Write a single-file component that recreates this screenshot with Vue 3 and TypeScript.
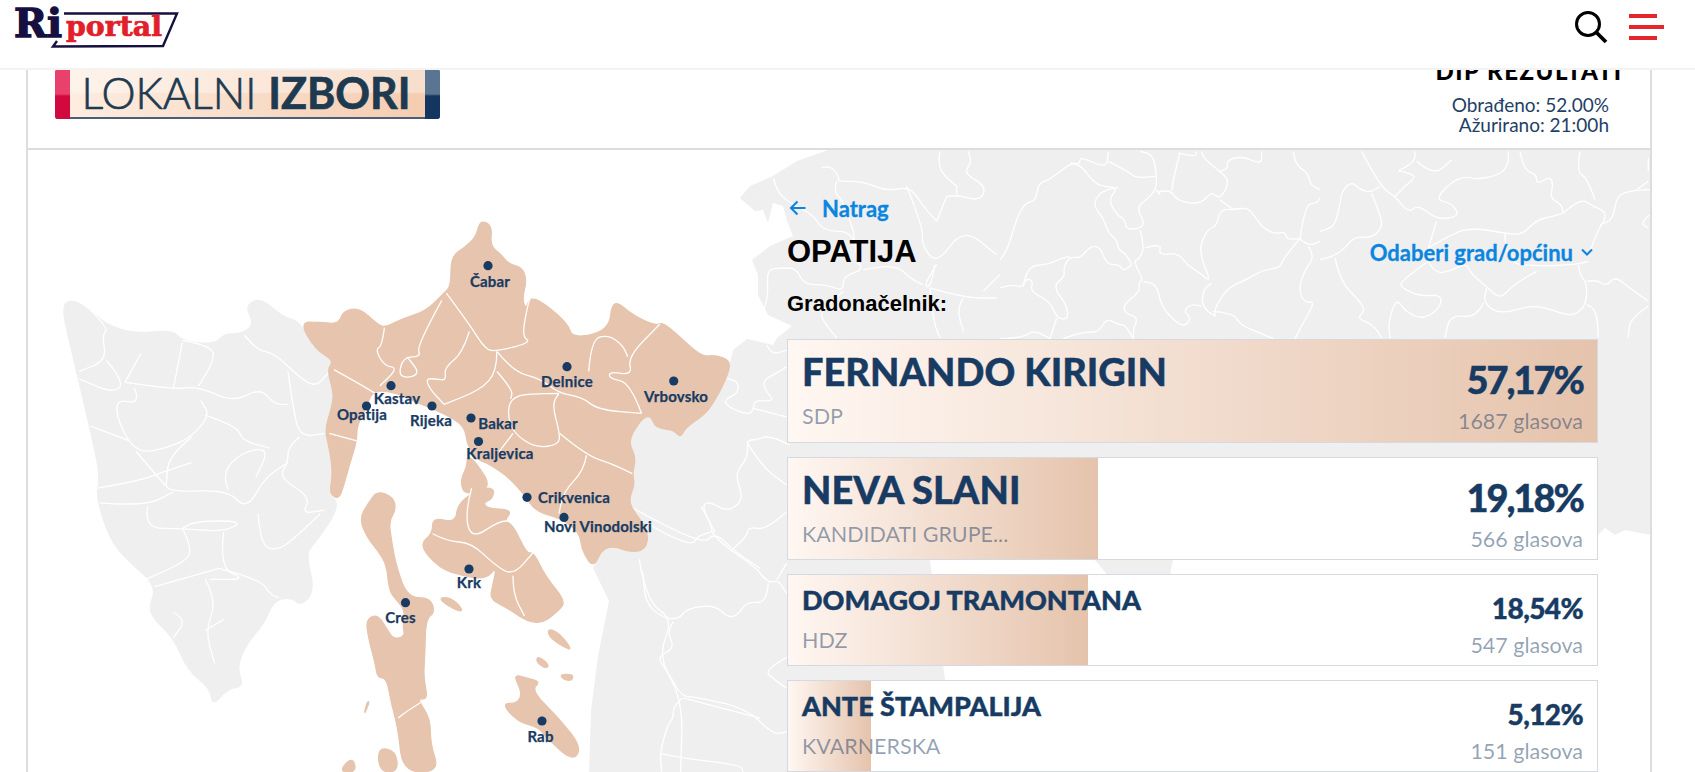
<script setup lang="ts">
interface Candidate {
  name: string
  party: string
  pct: number
  votes: number
  big?: boolean
}
const candidates: Candidate[] = [
  { name: "FERNANDO KIRIGIN", party: "SDP", pct: 57.17, votes: 1687, big: true },
  { name: "NEVA SLANI", party: "KANDIDATI GRUPE...", pct: 19.18, votes: 566, big: true },
  { name: "DOMAGOJ TRAMONTANA", party: "HDZ", pct: 18.54, votes: 547 },
  { name: "ANTE ŠTAMPALIJA", party: "KVARNERSKA", pct: 5.12, votes: 151 }
]
const barWidth = (pct: number) => Math.min(pct * 2, 100) + "%"
const pctLabel = (pct: number) => pct.toFixed(2).replace(".", ",") + "%"

const pins = [
  { name: "Čabar", x: 488, y: 265.7, lx: 490, ly: 282.4 },
  { name: "Kastav", x: 391, y: 385.7, lx: 397, ly: 399 },
  { name: "Opatija", x: 366.5, y: 406, lx: 362, ly: 415 },
  { name: "Rijeka", x: 432, y: 406, lx: 431, ly: 421 },
  { name: "Bakar", x: 471, y: 418, lx: 498, ly: 423.6 },
  { name: "Kraljevica", x: 478.5, y: 441.5, lx: 500, ly: 453.5 },
  { name: "Delnice", x: 567, y: 366.7, lx: 567, ly: 382.4 },
  { name: "Vrbovsko", x: 673.7, y: 381, lx: 676, ly: 397 },
  { name: "Crikvenica", x: 527, y: 497.3, lx: 574, ly: 497.7 },
  { name: "Novi Vinodolski", x: 564, y: 517.4, lx: 598, ly: 527 },
  { name: "Krk", x: 469, y: 569, lx: 469, ly: 583 },
  { name: "Cres", x: 405.5, y: 602.7, lx: 400.5, ly: 618 },
  { name: "Rab", x: 542, y: 721, lx: 540.5, ly: 737 }
]

// rounds the traced points, quadratic curves through the midpoints
const smooth = (raw: string, closed = false) => {
  const p = raw.split(" ").map(s => s.split(",").map(Number))
  const mid = (a: number[], b: number[]) => `${(a[0] + b[0]) / 2} ${(a[1] + b[1]) / 2}`
  if (closed) {
    let d = `M${mid(p[p.length - 1], p[0])}`
    p.forEach((pt, i) => {
      d += ` Q${pt[0]} ${pt[1]} ${mid(pt, p[(i + 1) % p.length])}`
    })
    return d + "Z"
  }
  let d = `M${p[0][0]} ${p[0][1]}`
  for (let i = 1; i < p.length - 1; i++) {
    d += ` Q${p[i][0]} ${p[i][1]} ${mid(p[i], p[i + 1])}`
  }
  const last = p[p.length - 1]
  return d + ` L${last[0]} ${last[1]}`
}

// traced shapes, each group keeps the scale it was traced at
const left = "translate(40 200) scale(.4592 .3648)"
const landLeft = "45,290 70,270 110,300 145,340 205,365 290,355 310,385 380,395 400,365 440,365 465,340 445,290 480,265 530,320 565,330 600,410 640,440 625,465 640,530 635,570 620,630 630,680 638,750 630,810 650,825 640,870 600,940 580,970 600,1070 570,1115 545,1090 510,1100 490,1160 450,1220 430,1280 445,1335 410,1340 375,1390 370,1340 320,1290 290,1200 230,1130 255,1060 190,990 150,930 120,810 130,760 110,640 80,480 65,400"
const landRight = "828,150 1652,150 1652,535 1640,533 1625,530 1615,535 1605,528 1598,535 1176,545 1170,575 1110,578 1095,560 1050,545 930,560 935,600 945,680 935,775 589,775 591,711 598,656 609,601 593,568 610,540 600,470 620,400 700,370 730,362 732,355 733,350 747,339 773,345 777,338 792,326 768,315 758,295 758,275 752,260 770,246 793,236 787,221 783,206 773,203 768,223 763,210 755,211 740,198 750,186 773,176 797,161"
const peach = [
  "958,55 985,70 980,125 1005,150 1020,175 1050,185 1060,220 1050,270 1058,300 1068,265 1100,285 1150,340 1158,375 1205,370 1240,345 1245,290 1258,280 1290,315 1340,345 1355,335 1385,365 1440,430 1470,425 1505,440 1495,490 1465,560 1445,590 1405,625 1395,652 1380,630 1340,625 1330,590 1310,600 1280,660 1298,705 1290,750 1295,780 1285,810 1285,840 1325,905 1320,960 1280,965 1255,950 1225,955 1205,1010 1180,960 1175,910 1130,870 1080,855 1050,800 1020,760 980,725 950,710 930,670 925,620 880,585 820,555 780,530 725,520 710,570 690,620 690,660 675,720 660,790 650,820 630,805 638,750 630,680 620,630 635,570 640,530 625,465 640,440 600,410 565,335 610,335 650,340 660,305 695,295 735,340 750,350 790,325 840,305 880,255 895,235 895,155 925,130 950,100",
  "930,700 950,720 985,790 925,810 915,770 930,730",
  "960,790 990,790 985,820 965,830 975,845 1030,850 1010,880 1030,890 1060,970 1075,965 1100,1030 1145,1100 1130,1125 1095,1160 1060,1155 1020,1120 980,1095 985,1060 995,1005 970,1040 920,1030 870,1010 825,945 855,915 855,870 905,885 910,830",
  "735,797 770,815 775,850 760,880 765,930 775,1000 800,1090 850,1090 860,1130 840,1150 838,1250 835,1310 845,1370 820,1365 850,1420 850,1490 870,1568 790,1568 780,1450 765,1380 755,1310 735,1310 730,1270 715,1200 710,1150 735,1135 755,1175 770,1205 795,1195 790,1170 795,1125 775,1095 760,1070 755,1000 735,960 715,930 695,875 715,830",
  "868,1090 895,1090 920,1120 915,1130 885,1110",
  "1105,1175 1130,1185 1160,1235 1140,1225 1110,1200",
  "1085,1250 1110,1275 1100,1285 1080,1265",
  "1132,1300 1162,1300 1158,1318 1140,1315",
  "1030,1300 1060,1310 1090,1320 1070,1345 1130,1420 1180,1500 1160,1540 1100,1470 1085,1445 1040,1430 1005,1380 1040,1380 1050,1350",
  "735,1500 775,1510 780,1568 740,1568",
  "650,1568 680,1525 690,1568",
  "712,1375 718,1375 705,1415"
]
const peachLines = [
  "885,255 935,340 970,410 995,415 1070,390 1050,375 1060,300 1068,265",
  "995,415 995,470 960,520 880,560",
  "995,415 1030,470 1090,490 1130,530 1180,540 1215,575 1310,585",
  "1130,530 1060,530 1025,545 1018,590 1032,640 1080,680 1130,670 1132,640 1115,560 1130,530",
  "995,470 1030,520 1025,545",
  "1132,640 1190,700 1240,720 1290,750",
  "1190,700 1185,740 1140,800 1130,860",
  "875,275 820,400 830,430 790,430 780,490 830,480 800,430",
  "935,360 920,420 880,460 885,495 860,490 840,490 850,520 880,560",
  "750,350 745,400 730,410 750,455 780,460 740,510",
  "640,465 690,500 730,530",
  "630,640 690,660",
  "1310,585 1285,500 1240,490 1240,470 1290,480 1280,430 1350,340",
  "1195,470 1200,380 1240,370 1270,400 1280,430",
  "1030,640 1000,690",
  "940,790 925,860 940,930 1000,880 1030,880",
  "855,915 885,935 940,940 990,1000 1030,1030 1075,965",
  "1030,1030 1030,1080 1055,1140",
  "845,1365 800,1400 780,1420"
]
const borders = [
  {
    t: left,
    lines: [
      "100,290 150,350 135,370 145,440 85,470",
      "145,440 185,500 160,530 85,490",
      "185,500 290,520 345,510 420,555 480,515 510,560 540,560",
      "290,520 310,390",
      "220,420 185,500",
      "310,385 380,400 375,450 345,510",
      "205,515 220,560 165,545 170,610 210,695 275,680 330,650 370,590 350,550",
      "110,620 195,660",
      "445,370 470,410 510,420 560,480 600,515 630,470",
      "540,470 550,560 565,650 620,640",
      "565,650 540,675 540,720 520,760 590,815 570,860 620,850",
      "210,690 270,780 290,800 410,795 450,850 490,760 540,720",
      "130,830 230,840 290,800",
      "235,840 225,900 310,900 400,910 445,880 340,880 310,900",
      "400,910 390,1010 450,1040 370,1040",
      "310,900 330,950 320,990 230,1040",
      "125,790 215,770 270,745 330,720",
      "410,795 395,750 440,690 500,680 470,760",
      "330,650 280,700 275,780",
      "360,590 430,620 440,660 500,680",
      "475,860 480,950 520,960 560,920 610,860",
      "390,1010 250,1060",
      "390,1010 480,1040 500,1080 520,1090",
      "360,1040 385,1100 360,1180 380,1270",
      "290,1130 320,1150 290,1200",
      "400,1150 360,1180",
      "1305,985 1320,1100 1380,1150 1345,1250 1400,1370 1395,1568",
      "1400,1365 1568,1420",
      "1285,840 1440,950 1470,910 1510,960 1568,1010",
      "1440,840 1470,910"
    ]
  },
  {
    t: "translate(680 148) scale(.3333)",
    lines: [
      "425,60 450,50 480,90 470,100 550,100 620,130 690,115 730,175 770,220",
      "470,100 460,130 490,160 520,250",
      "280,90 290,130 330,165 400,200 430,250 520,250 535,350",
      "520,250 530,340 550,365 490,385 490,430 440,410 370,410 350,360 300,360 260,365 265,440 250,490",
      "680,115 730,240 725,290 770,350 850,240 950,320",
      "800,145 770,220",
      "800,145 830,140 900,160 920,115 850,75 875,45 865,10",
      "830,115 830,140",
      "780,10 770,60 830,115",
      "770,350 730,410 750,420 765,350",
      "730,410 700,400 650,350 550,365",
      "750,420 850,450 950,450",
      "750,420 760,520 780,570",
      "850,450 830,480 850,550",
      "490,430 420,490 430,520 470,570",
      "960,380 910,430"
    ]
  },
  {
    t: "translate(1000 148) scale(.3333)",
    lines: [
      "0,335 20,315 50,210 75,165 108,158 115,105 150,95 212,45 240,48 240,25 320,62 325,10",
      "212,45 240,48 270,90 300,115 355,118 325,155 350,200 375,215 380,248 440,235 408,180 440,155 468,125 470,85 460,20 420,10",
      "325,40 385,70 405,90 470,85",
      "355,118 310,125 285,155 285,180 310,210 325,255 350,275 355,305 380,320 395,350",
      "420,245 435,300 415,335 400,340 430,395 415,405 420,430 370,470 375,495 415,510 400,540 400,572",
      "435,300 485,285 475,322 535,315 560,350 600,375 635,405 595,310 620,245 650,235 660,185 700,185 745,178 770,215 795,245 830,258 855,250 860,275 900,272",
      "468,125 485,145 470,130 515,128 530,158 600,170 635,130 660,155 690,100 660,70 610,30 605,10",
      "535,15 585,28 590,10",
      "540,15 525,70 515,128",
      "660,70 685,65 680,35 730,25 785,50 785,10",
      "660,155 700,185",
      "900,272 915,170 950,165 960,150",
      "880,10 885,50 925,75 930,110 960,125",
      "900,272 925,295 960,280",
      "900,272 850,330 840,360 790,365 740,395 680,420 640,490 650,510 605,475 610,425 635,405",
      "925,295 945,325 915,365 895,425 915,465 945,460 915,515 885,572",
      "0,420 35,408 65,420 80,390 100,400 90,430 150,460 170,510 205,515 200,470 158,415 195,385 190,360 210,325 240,332 270,295 300,295 320,350 360,350 370,370 395,350",
      "70,415 80,355 140,350 175,335 210,325",
      "150,572 170,510",
      "0,572 70,570 100,545 150,572",
      "190,572 245,550 295,555 320,510 355,530 375,530 400,572",
      "605,475 575,465 550,490 575,510 550,540 500,495 480,460 470,410 430,400",
      "640,490 700,495 720,530 780,555 820,572"
    ]
  },
  {
    t: "translate(1320 148) scale(.3333)",
    lines: [
      "125,10 180,115 225,145 265,195 295,170 350,215 420,205 395,165 345,155 395,100 440,85 470,95 540,80 565,50 565,10",
      "180,115 155,135 120,125 95,100 65,130 60,170 45,230 20,245 0,250",
      "155,135 185,210 185,240 155,270 105,265 75,300 40,325 0,335",
      "285,10 290,40 230,70 250,70 290,85 260,110 225,145",
      "290,40 340,85 395,35",
      "600,10 610,65 650,80 650,110 690,85 700,110 690,150 725,170 730,195",
      "730,195 780,150 820,175 855,190 855,215 835,245 810,310",
      "325,300 350,220",
      "325,300 400,255 460,240 555,255 605,262 650,215 700,205 730,195",
      "555,255 555,345 650,355 770,350 805,340",
      "325,340 345,380 400,365 440,345 455,380 500,415 540,455 580,410 650,370",
      "325,340 240,400 245,420 300,445 365,440 360,480 310,515 255,490 230,450 205,520 210,570",
      "45,330 60,400 120,460 135,490 110,510 160,530 185,570",
      "775,350 780,385 800,400 800,470 760,505 705,490 640,470 540,500 490,465 500,420",
      "490,465 470,510 390,500 375,570",
      "800,400 830,395 860,415 885,385 930,420 985,460",
      "985,475 930,510 925,570",
      "800,470 830,480 835,570",
      "990,125 950,125 890,140 880,215 840,230",
      "990,200 960,225 985,240",
      "780,10 770,70 800,90 825,155",
      "950,125 985,100",
      "985,30 985,70"
    ]
  },
  {
    t: "translate(640 330) scale(.3333)",
    lines: [
      "380,45 395,75 440,60",
      "440,110 410,130 370,150 375,180 405,215 345,210 340,235 330,255 270,235 250,210 295,190 295,155 260,145",
      "340,235 415,255 440,260",
      "450,345 390,315 350,330 320,330 325,380 285,430 305,490 300,520 260,545 210,515 185,525 215,590 215,610 270,660 345,710 385,760 415,750 440,790",
      "320,335 365,410 440,465",
      "440,545 380,600 325,590 320,620 275,660",
      "385,760 380,820 320,815 290,860 260,860 225,825 140,835 115,870 60,860 15,815 10,725 0,720",
      "30,585 90,620 160,645 170,620 215,605",
      "100,875 80,905 105,955 50,980 80,1020 125,1100 160,1100 320,1135 400,1215 440,1205",
      "125,1105 100,1130 100,1165 85,1180 60,1265 65,1325",
      "60,1270 130,1285 300,1305 310,1325",
      "410,750 440,700",
      "445,980 370,1020 405,1050 440,1075"
    ]
  }
]
</script>

<template>
  <div class="page">
    <header class="topbar">
      <svg class="logo" width="185" height="50" viewBox="0 0 185 50">
        <polyline points="64,13.5 177,13.5 163,46 53,46.5 57,41" fill="none" stroke="#15103f" stroke-width="2.4" />
        <text class="logo-ri" x="14" y="37" textLength="48" lengthAdjust="spacingAndGlyphs">Ri</text>
        <text class="logo-portal" x="66" y="36" textLength="96" lengthAdjust="spacingAndGlyphs">portal</text>
      </svg>
      <div class="top-icons">
        <svg width="36" height="36" viewBox="0 0 36 36">
          <circle cx="14" cy="14" r="11.5" fill="none" stroke="#000" stroke-width="3" />
          <line x1="22.5" y1="22.5" x2="32" y2="32" stroke="#000" stroke-width="3.8" />
        </svg>
        <div class="burger"><span></span><span></span><span></span></div>
      </div>
    </header>

    <main class="card">
      <div class="card-top">
        <div class="banner">
          <i class="cap cap-red"></i>
          <span class="banner-text">LOKALNI <b>IZBORI</b></span>
          <i class="cap cap-blue"></i>
        </div>
        <div class="status">
          <h3>DIP REZULTATI</h3>
          <p>Obrađeno: 52.00%</p>
          <p>Ažurirano: 21:00h</p>
        </div>
      </div>

      <section class="map-area">
        <svg class="map" width="1622" height="622" viewBox="28 150 1622 622">
          <polygon :points="landRight" fill="#efefef" />
          <path :d="smooth(landLeft, true)" :transform="left" fill="#efefef" />
          <g v-for="b in borders" :key="b.t" :transform="b.t">
            <path v-for="l in b.lines" :key="l" :d="smooth(l)" class="border" />
          </g>
          <g :transform="left">
            <path v-for="p in peach" :key="p" :d="smooth(p, true)" class="county" />
            <path v-for="l in peachLines" :key="l" :d="smooth(l)" class="border" />
          </g>
          <g v-for="pin in pins" :key="pin.name">
            <circle :cx="pin.x" :cy="pin.y" r="4.6" fill="#183b63" />
            <text class="pin-label" :x="pin.lx" :y="pin.ly + 5">{{ pin.name }}</text>
          </g>
        </svg>

        <div class="panel">
          <a class="back">
            <svg width="18" height="16" viewBox="0 0 18 16">
              <path d="M16.5 8H2M8.5 1.5L2 8l6.5 6.5" fill="none" stroke="#0a85e0" stroke-width="2.1" />
            </svg>
            Natrag
          </a>
          <div class="title-row">
            <h1>OPATIJA</h1>
            <a class="picker">
              Odaberi grad/općinu
              <svg width="12" height="8" viewBox="0 0 12 8">
                <path d="M1 1.5l5 5 5-5" fill="none" stroke="#0a85e0" stroke-width="2" />
              </svg>
            </a>
          </div>
          <h2>Gradonačelnik:</h2>
          <div class="results">
            <div v-for="c in candidates" :key="c.name" class="row" :class="{ big: c.big }">
              <div class="bar" :style="{ width: barWidth(c.pct) }"></div>
              <div class="who">
                <div class="name">{{ c.name }}</div>
                <div class="party">{{ c.party }}</div>
              </div>
              <div class="score">
                <div class="pct">{{ pctLabel(c.pct) }}</div>
                <div class="votes">{{ c.votes }} glasova</div>
              </div>
            </div>
          </div>
        </div>
      </section>
    </main>
  </div>
</template>

<style>
html,
body {
  margin: 0;
  background: #fff;
  overflow: hidden;
}
</style>

<style scoped>
.page {
  height: 772px;
  overflow: hidden;
  font-family: Lato, "Liberation Sans", sans-serif;
}
.topbar {
  position: relative;
  z-index: 5;
  height: 68px;
  background: #fff;
  border-bottom: 2px solid #f3f3f3;
  display: flex;
  justify-content: space-between;
  align-items: flex-start;
}
.top-icons {
  display: flex;
  gap: 19px;
  padding: 10px 30px 0 0;
}
.burger {
  width: 36px;
  padding-top: 4px;
  display: flex;
  flex-direction: column;
  gap: 7px;
}
.burger span {
  display: block;
  width: 28px;
  height: 4px;
  background: #e4262c;
}
.burger span:nth-child(2) {
  width: 35px;
}
.logo-ri {
  font: 700 40px "DejaVu Serif", serif;
  fill: #15103f;
  stroke: #15103f;
  stroke-width: 1.4px;
}
.logo-portal {
  font: 700 28px "DejaVu Serif", serif;
  fill: #e2202a;
  stroke: #e2202a;
  stroke-width: 0.7px;
}
.card {
  margin: -50px 43px 0 26px;
  border-left: 2px solid #ddd;
  border-right: 2px solid #ddd;
}
.card-top {
  height: 130px;
  box-sizing: border-box;
  border-bottom: 2px solid #ddd;
  display: flex;
  justify-content: space-between;
  padding: 49px 26px 0 27px;
}
.banner {
  position: relative;
  width: 385px;
  height: 50px;
  box-sizing: border-box;
  border-bottom: 2px solid #4d5d78;
  border-radius: 3px;
  background: linear-gradient(180deg, rgba(255, 255, 255, 0.35) 0 48%, rgba(255, 255, 255, 0) 52%),
    linear-gradient(90deg, #fdeee2, #f4cbae);
  display: flex;
  align-items: center;
  justify-content: center;
}
.cap {
  position: absolute;
  top: 0;
  bottom: -2px;
  width: 15px;
}
.cap-red {
  left: 0;
  border-radius: 3px 0 0 3px;
  background: linear-gradient(180deg, #e8416c 0 50%, #d2093f 54%);
}
.cap-blue {
  right: 0;
  border-radius: 0 3px 3px 0;
  background: linear-gradient(180deg, #5a7592 0 50%, #12365f 54%);
}
.banner-text {
  margin-left: -3px;
  font-size: 43px;
  line-height: 50px;
  font-weight: 300;
  color: #1d3a50;
  white-space: nowrap;
  -webkit-text-stroke: 0.7px #1d3a50;
}
.banner-text b {
  font-weight: 700;
}
.status {
  width: 190px;
  text-align: right;
  color: #1f3f66;
  font-size: 19px;
  line-height: 20px;
}
.status h3 {
  margin: -12px 0 10px;
  text-align: center;
  color: #000;
  font-size: 24px;
  line-height: 28px;
  font-weight: 900;
  letter-spacing: 1.5px;
  white-space: nowrap;
}
.status p {
  margin: 0 15px 0 -30px;
  white-space: nowrap;
}
.map-area {
  position: relative;
  display: flex;
  justify-content: flex-end;
  padding-right: 52px;
  height: 700px;
}
.map {
  position: absolute;
  top: 0;
  left: 0;
}
.border {
  fill: none;
  stroke: #fff;
  stroke-width: 1.3;
  stroke-linejoin: round;
  vector-effect: non-scaling-stroke;
}
.county {
  fill: #e6c4ad;
  stroke: #e6c4ad;
  stroke-width: 1.2;
  vector-effect: non-scaling-stroke;
}
.pin-label {
  font: 700 15px Lato, sans-serif;
  letter-spacing: 0.2px;
  fill: #183b63;
  stroke: #183b63;
  stroke-width: 0.25px;
  text-anchor: middle;
}
.panel {
  position: relative;
  width: 811px;
  padding-top: 46px;
}
.back {
  display: flex;
  align-items: center;
  gap: 15px;
  height: 24px;
  padding-left: 2px;
  color: #0a85e0;
  font-size: 22px;
  font-weight: 700;
  -webkit-text-stroke: 0.3px #0a85e0;
}
.title-row {
  display: flex;
  justify-content: space-between;
  align-items: center;
  margin-top: 15px;
  padding-right: 5px;
}
h1 {
  margin: 0;
  font: 700 31px/34px "Liberation Sans", sans-serif;
  color: #000;
}
.picker {
  display: flex;
  align-items: center;
  gap: 8px;
  color: #0a85e0;
  font-size: 22px;
  font-weight: 700;
  -webkit-text-stroke: 0.3px #0a85e0;
}
h2 {
  margin: 23px 0 0;
  font: 700 22px/24px "Liberation Sans", sans-serif;
  color: #000;
}
.results {
  margin-top: 23px;
  display: flex;
  flex-direction: column;
  gap: 14px;
}
.row {
  position: relative;
  height: 92px;
  box-sizing: border-box;
  border: 1px solid #d5dae2;
  background: #fff;
  padding: 8px 14px 0 14px;
  display: flex;
  justify-content: space-between;
  flex-shrink: 0;
}
.row.big {
  height: 103.5px;
  padding-top: 9px;
}
.bar {
  position: absolute;
  top: 0;
  left: 0;
  bottom: 0;
  background: linear-gradient(90deg, #fff7f2, #e5c3ac);
}
.who,
.score {
  position: relative;
}
.score {
  text-align: right;
}
.name {
  font-size: 27px;
  line-height: 34px;
  font-weight: 900;
  color: #183b63;
  -webkit-text-stroke: 0.4px #183b63;
}
.big .name {
  font-size: 38px;
  line-height: 44px;
}
.party,
.votes {
  font-size: 21.5px;
  line-height: 26px;
  color: rgba(24, 59, 99, 0.47);
}
.party {
  margin-top: 10px;
}
.big .party {
  margin-top: 10px;
}
.pct {
  margin-top: 8px;
  font-size: 28px;
  line-height: 34px;
  font-weight: 900;
  letter-spacing: -0.6px;
  color: #183b63;
  -webkit-text-stroke: 0.4px #183b63;
}
.big .pct {
  margin-top: 8px;
  font-size: 38px;
  line-height: 44px;
  letter-spacing: -2px;
}
.votes {
  margin-top: 7px;
}
.big .votes {
  margin-top: 7px;
}
</style>
